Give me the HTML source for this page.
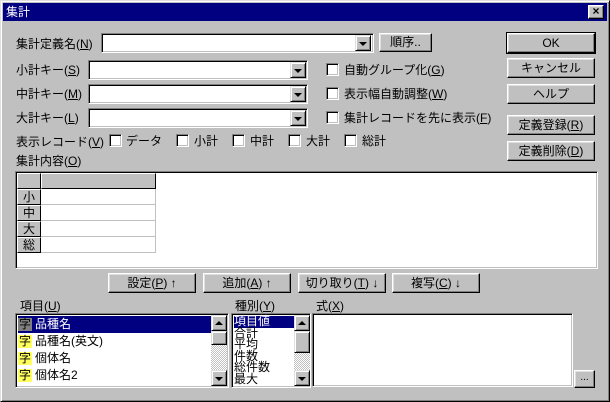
<!DOCTYPE html>
<html><head><meta charset="utf-8"><style>
*{box-sizing:border-box;margin:0;padding:0}
body{width:610px;height:402px;background:#c0c0c0;font-family:"Liberation Sans","Noto Sans CJK JP","IPAGothic",sans-serif;font-size:12px;color:#000;position:relative;overflow:hidden}
.a{position:absolute;white-space:nowrap}
.win{position:absolute;left:0;top:0;width:610px;height:402px;border:1px solid;border-color:#dfdfdf #000 #000 #dfdfdf;box-shadow:inset 1px 1px #fff,inset -1px -1px #808080}
.title{left:3px;top:3px;width:604px;height:18px;background:#000080;color:#fff;font-size:12px;line-height:18px;padding-left:3px}
.btn{position:absolute;background:#c0c0c0;border:1px solid;border-color:#fff #000 #000 #fff;box-shadow:inset -1px -1px #808080,inset 1px 1px #dfdfdf;text-align:center;white-space:nowrap}
.def{outline:1px solid #000}
.sunk{position:absolute;background:#fff;border:1px solid;border-color:#808080 #fff #fff #808080;box-shadow:inset 1px 1px #000,inset -1px -1px #c0c0c0}
.dd{position:absolute;width:16px;background:#c0c0c0;border:1px solid;border-color:#dfdfdf #000 #000 #dfdfdf;box-shadow:inset 1px 1px #fff,inset -1px -1px #808080}
.dd:after{content:"";position:absolute;left:3px;top:6px;border-left:4px solid transparent;border-right:4px solid transparent;border-top:4px solid #000}
.up:after{border-top:none;border-bottom:4px solid #000;top:5px}
.cb{position:absolute;width:13px;height:13px;background:#fff;border:1px solid;border-color:#808080 #fff #fff #808080;box-shadow:inset 1px 1px #000,inset -1px -1px #c0c0c0}
u{text-decoration:underline}
.track{position:absolute;width:16px;background-image:repeating-conic-gradient(#c0c0c0 0 25%,#fff 0 50%);background-size:2px 2px}
.thumb{position:absolute;width:16px;background:#c0c0c0;border:1px solid;border-color:#dfdfdf #000 #000 #dfdfdf;box-shadow:inset 1px 1px #fff,inset -1px -1px #808080}
.hc{position:absolute;background:#c0c0c0;border:1px solid;border-color:#fff #000 #000 #fff;text-align:center;line-height:14px}
.cell{position:absolute;border-right:1px solid #c0c0c0;border-bottom:1px solid #c0c0c0;background:#fff}
.ji{display:inline-block;width:14px;height:13px;background:#ffff60;line-height:13px;text-align:center;margin-right:3px;vertical-align:middle}
</style></head><body>
<div class="win"></div>
<div class="a title">集計</div>
<div class="btn" style="left:588px;top:5px;width:16px;height:14px;line-height:11px;font-size:12px;font-weight:bold">×</div>

<div class="a" style="left:16px;top:35px">集計定義名(<u>N</u>)</div>
<div class="sunk" style="left:101px;top:33px;width:273px;height:20px"></div>
<div class="dd" style="left:355px;top:35px;height:16px"></div>
<div class="btn" style="left:379px;top:33px;width:53px;height:19px;line-height:16px">順序..</div>

<div class="a" style="left:16px;top:61px">小計キー(<u>S</u>)</div>
<div class="sunk" style="left:88px;top:60px;width:220px;height:20px"></div>
<div class="dd" style="left:290px;top:62px;height:16px"></div>
<div class="a" style="left:16px;top:85px">中計キー(<u>M</u>)</div>
<div class="sunk" style="left:88px;top:84px;width:220px;height:20px"></div>
<div class="dd" style="left:290px;top:86px;height:16px"></div>
<div class="a" style="left:16px;top:109px">大計キー(<u>L</u>)</div>
<div class="sunk" style="left:88px;top:108px;width:220px;height:20px"></div>
<div class="dd" style="left:290px;top:110px;height:16px"></div>

<div class="cb" style="left:326px;top:63px"></div><div class="a" style="left:344px;top:61px">自動グループ化(<u>G</u>)</div>
<div class="cb" style="left:326px;top:87px"></div><div class="a" style="left:344px;top:85px">表示幅自動調整(<u>W</u>)</div>
<div class="cb" style="left:326px;top:111px"></div><div class="a" style="left:344px;top:109px">集計レコードを先に表示(<u>F</u>)</div>

<div class="a" style="left:16px;top:133px">表示レコード(<u>V</u>)</div>
<div class="cb" style="left:109px;top:134px"></div><div class="a" style="left:126px;top:132px">データ</div>
<div class="cb" style="left:176px;top:134px"></div><div class="a" style="left:194px;top:132px">小計</div>
<div class="cb" style="left:232px;top:134px"></div><div class="a" style="left:250px;top:132px">中計</div>
<div class="cb" style="left:288px;top:134px"></div><div class="a" style="left:306px;top:132px">大計</div>
<div class="cb" style="left:344px;top:134px"></div><div class="a" style="left:362px;top:132px">総計</div>

<div class="btn def" style="left:507px;top:33px;width:88px;height:20px;line-height:18px">OK</div>
<div class="btn" style="left:507px;top:58px;width:88px;height:20px;line-height:18px">キャンセル</div>
<div class="btn" style="left:507px;top:84px;width:88px;height:20px;line-height:18px">ヘルプ</div>
<div class="btn" style="left:507px;top:115px;width:88px;height:20px;line-height:18px">定義登録(<u>R</u>)</div>
<div class="btn" style="left:507px;top:141px;width:88px;height:20px;line-height:18px">定義削除(<u>D</u>)</div>

<div class="a" style="left:16px;top:152px">集計内容(<u>O</u>)</div>
<div class="sunk" style="left:15px;top:171px;width:583px;height:98px"></div>
<div class="hc" style="left:17px;top:173px;width:24px;height:16px"></div>
<div class="hc" style="left:41px;top:173px;width:115px;height:16px"></div>
<div class="hc" style="left:17px;top:189px;width:24px;height:16px">小</div>
<div class="hc" style="left:17px;top:205px;width:24px;height:16px">中</div>
<div class="hc" style="left:17px;top:221px;width:24px;height:16px">大</div>
<div class="hc" style="left:17px;top:237px;width:24px;height:16px">総</div>
<div class="cell" style="left:41px;top:189px;width:115px;height:16px"></div>
<div class="cell" style="left:41px;top:205px;width:115px;height:16px"></div>
<div class="cell" style="left:41px;top:221px;width:115px;height:16px"></div>
<div class="cell" style="left:41px;top:237px;width:115px;height:16px"></div>

<div class="btn" style="left:108px;top:273px;width:88px;height:20px;line-height:18px">設定(<u>P</u>) ↑</div>
<div class="btn" style="left:203px;top:273px;width:88px;height:20px;line-height:18px">追加(<u>A</u>) ↑</div>
<div class="btn" style="left:298px;top:273px;width:88px;height:20px;line-height:18px">切り取り(<u>T</u>) ↓</div>
<div class="btn" style="left:392px;top:273px;width:88px;height:20px;line-height:18px">複写(<u>C</u>) ↓</div>

<div class="a" style="left:20px;top:297px">項目(<u>U</u>)</div>
<div class="a" style="left:235px;top:297px">種別(<u>Y</u>)</div>
<div class="a" style="left:316px;top:297px">式(<u>X</u>)</div>

<div class="sunk" style="left:15px;top:313px;width:214px;height:75px;overflow:hidden;padding:2px">
 <div style="height:17px;line-height:17px;background:#000080;color:#fff;width:194px"><span class="ji" style="background:#808080;color:#000">字</span>品種名</div>
 <div style="height:17px;line-height:17px"><span class="ji">字</span>品種名(英文)</div>
 <div style="height:17px;line-height:17px"><span class="ji">字</span>個体名</div>
 <div style="height:17px;line-height:17px"><span class="ji">字</span>個体名2</div>
</div>
<div class="track" style="left:211px;top:315px;height:71px"></div>
<div class="dd up" style="left:211px;top:315px;height:16px"></div>
<div class="thumb" style="left:211px;top:331px;height:14px"></div>
<div class="dd" style="left:211px;top:370px;height:16px"></div>

<div class="sunk" style="left:231px;top:313px;width:80px;height:75px;overflow:hidden;padding:2px;line-height:11.5px">
 <div style="background:#000080;color:#fff;width:62px">項目値</div><div>合計</div><div>平均</div><div>件数</div><div>総件数</div><div>最大</div>
</div>
<div class="track" style="left:294px;top:315px;height:71px"></div>
<div class="dd up" style="left:294px;top:315px;height:16px"></div>
<div class="thumb" style="left:294px;top:331px;height:22px"></div>
<div class="dd" style="left:294px;top:370px;height:16px"></div>

<div class="sunk" style="left:312px;top:313px;width:261px;height:74px"></div>
<div class="btn" style="left:574px;top:370px;width:21px;height:18px;line-height:14px;font-size:10px">...</div>
</body></html>
